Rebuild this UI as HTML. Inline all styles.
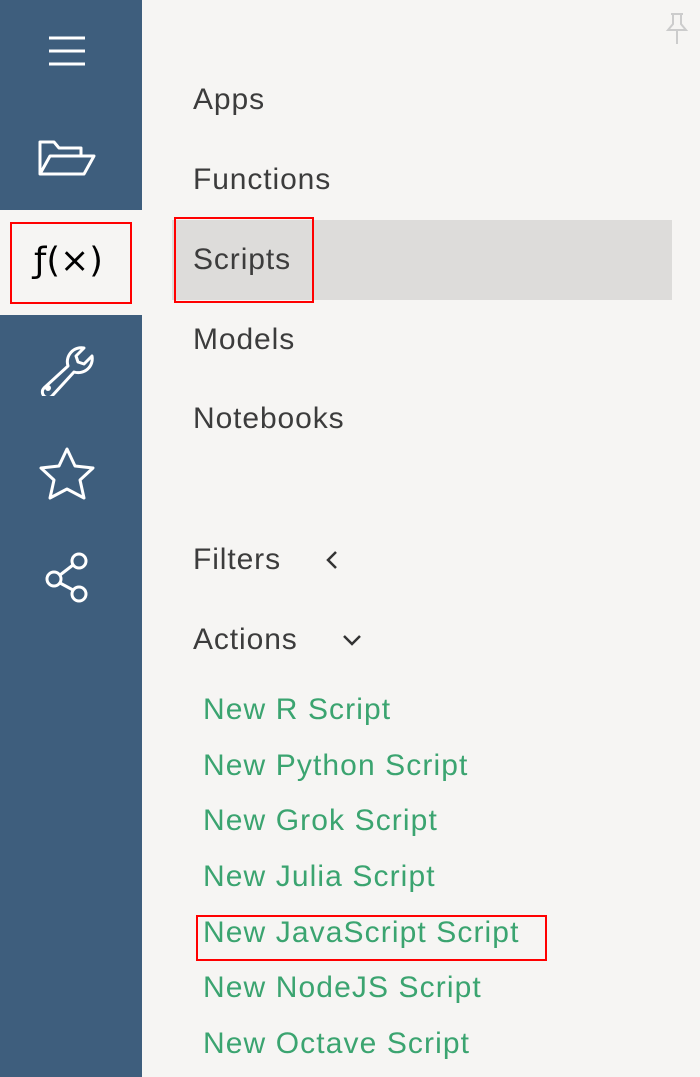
<!DOCTYPE html>
<html><head><style>
body{margin:0;width:700px;height:1077px;background:#f6f5f3;font-family:"Liberation Sans",sans-serif;position:relative;overflow:hidden}
.sb{position:absolute;left:0;top:0;width:142px;height:1077px;background:#3e5e7d}
.act{position:absolute;left:0;top:210px;width:142px;height:105px;background:#f6f5f3}
.box{position:absolute;border:2px solid #f00;box-sizing:border-box}
.t{position:absolute;left:193px;font-size:30px;letter-spacing:0.9px;color:#3c3c3c;line-height:1}
.g{position:absolute;left:203px;font-size:30px;letter-spacing:1.1px;color:#3ba470;line-height:1}
svg{position:absolute}
</style></head><body>
<div class="sb"></div>
<div class="act"></div>
<svg style="left:48px;top:36px" width="40" height="32"><g stroke="#fff" stroke-width="3"><line x1="1" y1="2" x2="37" y2="2"/><line x1="1" y1="15" x2="37" y2="15"/><line x1="1" y1="28" x2="37" y2="28"/></g></svg>
<svg style="left:36px;top:136px" width="62" height="44" fill="none" stroke="#fff" stroke-width="3" stroke-linejoin="round"><path d="M4 38V6h14l5 6h22v8 M4 38l10-18h44l-10 18z"/></svg>
<div class="box" style="left:10px;top:222px;width:122px;height:82px"></div>
<div style="position:absolute;left:34px;top:244px;font-size:35px;color:#000;font-family:'DejaVu Sans',sans-serif;line-height:1">ƒ(×)</div>
<svg style="left:38px;top:344px" width="58" height="52" fill="none" stroke="#fff" stroke-width="3" stroke-linejoin="round"><path d="M6 44l24-22a14 14 0 0 1 16-18l-8 8 2 6 6 2 8-8a14 14 0 0 1-18 16l-22 24a5 5 0 0 1-8-8z"/><circle cx="10" cy="44" r="1.5"/></svg>
<svg style="left:38px;top:446px" width="58" height="56" fill="none" stroke="#fff" stroke-width="3" stroke-linejoin="round"><path d="M29 3l8 17 18 2-13 12 4 18-17-9-17 9 4-18-13-12 18-2z"/></svg>
<svg style="left:42px;top:552px" width="52" height="52" fill="none" stroke="#fff" stroke-width="3"><circle cx="37" cy="9" r="7"/><circle cx="12" cy="27" r="7"/><circle cx="37" cy="42" r="7"/><line x1="18" y1="23" x2="31" y2="13"/><line x1="18" y1="31" x2="31" y2="38"/></svg>
<svg style="left:664px;top:12px" width="26" height="34" fill="none" stroke="#ccc" stroke-width="2"><path d="M7 2h12M9 2v10l-5 6h18l-5-6V2M13 18v14"/></svg>
<div style="position:absolute;left:172px;top:220px;width:500px;height:80px;background:#dddcda"></div>
<div class="box" style="left:174px;top:217px;width:140px;height:86px"></div>
<div class="t" style="top:85px">Apps</div>
<div class="t" style="top:165px">Functions</div>
<div class="t" style="top:245px">Scripts</div>
<div class="t" style="top:325px">Models</div>
<div class="t" style="top:404px">Notebooks</div>
<div class="t" style="top:545px">Filters</div>
<svg style="left:324px;top:550px" width="16" height="20" fill="none" stroke="#333" stroke-width="2.5"><path d="M12 2l-8 8 8 8"/></svg>
<div class="t" style="top:625px">Actions</div>
<svg style="left:342px;top:632px" width="20" height="16" fill="none" stroke="#333" stroke-width="2.5"><path d="M2 4l8 8 8-8"/></svg>
<div class="g" style="top:695px">New R Script</div>
<div class="g" style="top:751px">New Python Script</div>
<div class="g" style="top:806px">New Grok Script</div>
<div class="g" style="top:862px">New Julia Script</div>
<div class="g" style="top:918px">New JavaScript Script</div>
<div class="box" style="left:196px;top:915px;width:351px;height:46px"></div>
<div class="g" style="top:973px">New NodeJS Script</div>
<div class="g" style="top:1029px">New Octave Script</div>
</body></html>
